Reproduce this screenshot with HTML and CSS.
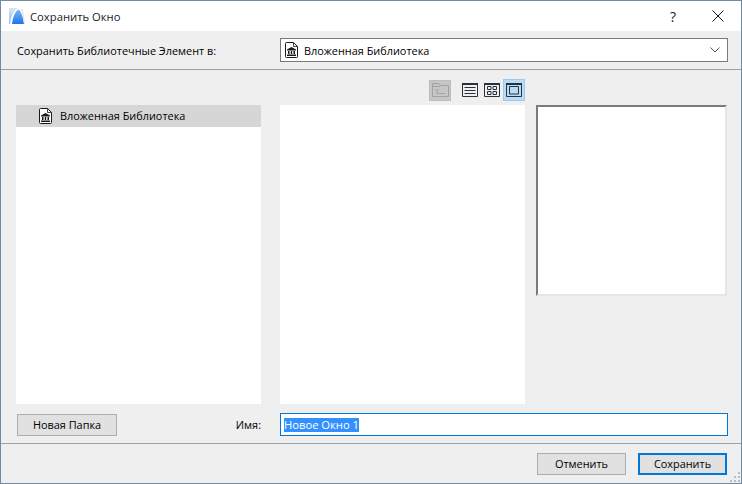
FILE: index.html
```html
<!DOCTYPE html>
<html lang="ru">
<head>
<meta charset="utf-8">
<title>Сохранить Окно</title>
<link rel="stylesheet" href="styles.css">
</head>
<body>
<svg class="defs" width="0" height="0">
  <symbol id="lib" viewBox="0 0 13 16">
    <path d="M.5 1.500a1 1 0 0 1 1-1H8.500L12.500 4.500v10a1 1 0 0 1-1 1h-10a1 1 0 0 1-1-1z" fill="#fff" stroke="#1a1a1a"/>
    <path d="M8.500.500V4.500h4" fill="none" stroke="#1a1a1a" stroke-width=".8"/>
    <path d="M6.500 5 11 7.500V8.500H2V7.500z M2 12.500h9V14H2z M3 9h1.500v3H3z M5.800 9h1.400v3H5.800z M8.500 9H10v3H8.500z" fill="#1a1a1a"/>
  </symbol>
</svg>
<div class="window">
  <header class="titlebar">
    <svg class="app-icon" width="16" height="16" viewBox="0 0 16 16">
      <defs>
        <linearGradient id="ag" x1="0" y1="0" x2="0" y2="1"><stop offset="0" stop-color="#7db6f5"/><stop offset="1" stop-color="#1f74ee"/></linearGradient>
        <linearGradient id="al" x1="0" y1="0" x2="0" y2="1"><stop offset="0" stop-color="#d5e6f8"/><stop offset="1" stop-color="#8dbcf0"/></linearGradient>
      </defs>
      <path d="M0 0h9C5 2 2 8 1 16H0z" fill="url(#al)"/>
      <path d="M3 16C4 9 6 3 9.500 1.500 12 3 14 9 15 16z" fill="url(#ag)"/>
      <path d="M12 1h2l2 15h-1C14 9 13 4 12 1z" fill="#e4e4e4"/>
    </svg>
    <span class="title">Сохранить Окно</span>
    <span class="help">?</span>
    <svg class="close" width="12" height="12" viewBox="0 0 12 12"><path d="M.5.500l11 11M11.500.500l-11 11" stroke="#111" fill="none"/></svg>
  </header>
  <section class="location">
    <label class="location-label">Сохранить Библиотечные Элемент в:</label>
    <div class="select">
      <svg class="lib-icon" width="13" height="16"><use href="#lib"/></svg>
      <span class="select-text">Вложенная Библиотека</span>
      <svg class="chevron" width="10" height="6" viewBox="0 0 10 6"><path d="M.5.500 5 5 9.500.500" fill="none" stroke="#555"/></svg>
    </div>
  </section>
  <main class="content">
    <div class="toolbar">
      <span class="tool tool-up">
        <svg width="17" height="14" viewBox="0 0 17 14"><path d="M.5 13.500V.500h6l2 2h8v11z M.5 3.500h8 M7 6 5 8 3 6 M5 8 5 10.500H13" fill="none" stroke="#a2a2a2"/></svg>
      </span>
      <span class="views">
        <span class="tool"><svg width="16" height="14" viewBox="0 0 16 14"><path d="M.5 1h15v12.500H.5z" fill="none" stroke="#26323d"/><path d="M0 1h16" stroke="#26323d" stroke-width="2"/><path d="M2.500 4.500h11M2.500 7.500h11M2.500 10.500h11" fill="none" stroke="#26323d"/></svg></span>
        <span class="tool"><svg width="16" height="14" viewBox="0 0 16 14"><path d="M.5 1h15v12.500H.5z" fill="none" stroke="#26323d"/><path d="M0 1h16" stroke="#26323d" stroke-width="2"/><path d="M3.500 3.500h3.500v3H3.500zM9 3.500h3.500v3H9zM3.500 8.500h3.500v3H3.500zM9 8.500h3.500v3H9z" fill="none" stroke="#26323d"/></svg></span>
        <span class="tool tool-active"><svg width="16" height="14" viewBox="0 0 16 14"><path d="M.5 1h15v12.500H.5z" fill="none" stroke="#26323d"/><path d="M0 1h16" stroke="#26323d" stroke-width="2"/><path d="M3.500 3.500h9v7.500h-9z" fill="none" stroke="#26323d"/></svg></span>
      </span>
    </div>
    <div class="panes">
      <div class="pane tree">
        <div class="tree-row">
          <svg class="lib-icon" width="13" height="16"><use href="#lib"/></svg>
          <span class="tree-label">Вложенная Библиотека</span>
        </div>
      </div>
      <div class="pane list"></div>
      <div class="preview-col"><div class="preview"></div></div>
    </div>
    <div class="name-row">
      <div class="name-left">
        <button class="btn btn-folder">Новая Папка</button>
        <span class="name-label">Имя:</span>
      </div>
      <div class="name-input"><span class="selected">Новое Окно 1</span></div>
    </div>
  </main>
  <footer class="footer">
    <button class="btn">Отменить</button>
    <button class="btn btn-default">Сохранить</button>
    <svg class="grip" width="11" height="11" viewBox="0 0 11 11"><path d="M8 0h2v2H8zM4 4h2v2H4zM8 4h2v2H8zM0 8h2v2H0zM4 8h2v2H4zM8 8h2v2H8z" fill="#bdbdbd"/></svg>
  </footer>
</div>
</body>
</html>
```
FILE: styles.css
```css
* { box-sizing: border-box; }
html, body { margin: 0; padding: 0; }
body {
  width: 742px;
  height: 484px;
  overflow: hidden;
  font-family: "Open Sans", "Liberation Sans", sans-serif;
  font-size: 10.9px;
  color: #000;
}
.defs { position: absolute; }
.window {
  width: 742px;
  height: 484px;
  display: flex;
  flex-direction: column;
  background: #efefef;
  border: 1px solid #6f8ca6;
}
.titlebar {
  height: 30px;
  flex: none;
  background: #fff;
  display: flex;
  align-items: center;
  padding-left: 8px;
}
.app-icon { flex: none; }
.title { margin-left: 5px; font-size: 11.25px; color: #222; flex: 1; }
.help { font-size: 14px; color: #222; width: 12px; margin-right: 30px; }
.close { margin-right: 17px; }
.location {
  height: 39px;
  flex: none;
  display: flex;
  align-items: center;
  justify-content: space-between;
  padding: 0 13px 0 16px;
  border-bottom: 1px solid #a0a0a0;
}
.select {
  width: 448px;
  height: 24px;
  display: flex;
  align-items: center;
  background: #fff;
  border: 1px solid #7a7a7a;
  padding: 0 7px 0 4px;
}
.select-text { flex: 1; margin-left: 6px; }
.lib-icon { flex: none; }
.content {
  flex: 1;
  display: flex;
  flex-direction: column;
  padding: 9px 14px 0 15px;
}
.toolbar {
  height: 22px;
  flex: none;
  display: flex;
  justify-content: flex-end;
  align-items: center;
  padding-right: 202px;
}
.tool {
  width: 22px;
  height: 22px;
  display: flex;
  align-items: center;
  justify-content: center;
  border: 1px solid transparent;
}
.tool-up { background: #c6c6c6; border-color: #bdbdbd; margin-right: 8px; height: 21px; }
.tool-active { background: #b9dbf5; border-color: #97cbf3; }
.views { display: flex; }
.panes {
  flex: none;
  margin-top: 4px;
  height: 299px;
  display: flex;
}
.pane { background: #fff; width: 245px; }
.list { margin-left: 19px; }
.tree-row {
  height: 22px;
  background: #d6d6d6;
  display: flex;
  align-items: center;
  gap: 8px;
  padding-left: 23px;
}
.tree-label { margin-bottom: 2px; }
.preview-col { margin-left: 11px; width: 191px; }
.preview {
  height: 191px;
  background: #fff;
  border: 2px solid #e6e6e6;
  border-top-color: #7b7b7b;
  border-left-color: #7b7b7b;
}
.name-row {
  margin-top: 9px;
  display: flex;
  align-items: center;
  height: 23px;
}
.name-left {
  width: 245px;
  flex: none;
  display: flex;
  align-items: center;
  justify-content: space-between;
  padding-left: 1px;
}
.name-input {
  flex: none;
  margin-left: 19px;
  width: 448px;
  height: 23px;
  background: #fff;
  border: 1px solid #0078d7;
  padding: 0 3px;
  display: flex;
  align-items: center;
}
.selected { background: #3390ff; color: #fff; line-height: 14px; font-size: 11.2px; }
.btn {
  font: inherit;
  color: #000;
  width: 89px;
  height: 22px;
  padding: 0;
  background: #e1e1e1;
  border: 1px solid #adadad;
}
.btn-folder { width: 100px; }
.btn-default { border: 2px solid #0078d7; margin-left: 12px; }
.footer {
  position: relative;
  height: 40px;
  flex: none;
  border-top: 1px solid #a0a0a0;
  display: flex;
  align-items: center;
  justify-content: flex-end;
  padding: 0 14px 0 0;
}
.grip { position: absolute; right: 0; bottom: 0; }
```
